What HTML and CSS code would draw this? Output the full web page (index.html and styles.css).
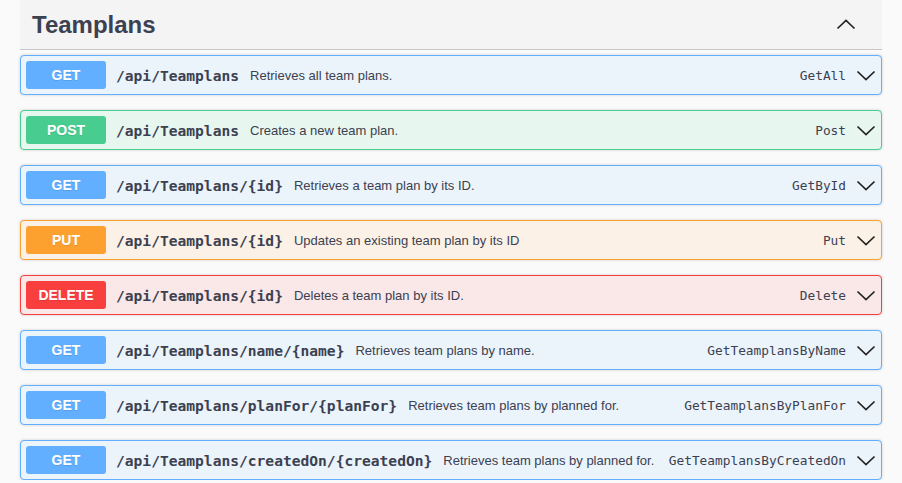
FILE: index.html
```html
<!DOCTYPE html>
<html>
<head>
<meta charset="utf-8">
<link rel="stylesheet" href="styles.css">
</head>
<body>
<div class="wrap">
  <div class="tag">
    <h3 class="tag-title">Teamplans</h3>
    <svg class="arrow-up" width="20" height="20" viewBox="0 0 20 20"><polyline points="1.5,13.5 10,5.5 18.5,13.5" fill="none" stroke="#222" stroke-width="1.7"/></svg>
  </div>
  <div class="ops">
    <div class="op get"><span class="method">GET</span><span class="path">/api/Teamplans</span><span class="desc">Retrieves all team plans.</span><span class="opid">GetAll</span><svg class="arrow" width="20" height="20" viewBox="0 0 20 20"><polyline points="1.5,6.5 10,14.5 18.5,6.5" fill="none" stroke="#222" stroke-width="1.7"/></svg></div>
    <div class="op post"><span class="method">POST</span><span class="path">/api/Teamplans</span><span class="desc">Creates a new team plan.</span><span class="opid">Post</span><svg class="arrow" width="20" height="20" viewBox="0 0 20 20"><polyline points="1.5,6.5 10,14.5 18.5,6.5" fill="none" stroke="#222" stroke-width="1.7"/></svg></div>
    <div class="op get"><span class="method">GET</span><span class="path">/api/Teamplans/{id}</span><span class="desc">Retrieves a team plan by its ID.</span><span class="opid">GetById</span><svg class="arrow" width="20" height="20" viewBox="0 0 20 20"><polyline points="1.5,6.5 10,14.5 18.5,6.5" fill="none" stroke="#222" stroke-width="1.7"/></svg></div>
    <div class="op put"><span class="method">PUT</span><span class="path">/api/Teamplans/{id}</span><span class="desc">Updates an existing team plan by its ID</span><span class="opid">Put</span><svg class="arrow" width="20" height="20" viewBox="0 0 20 20"><polyline points="1.5,6.5 10,14.5 18.5,6.5" fill="none" stroke="#222" stroke-width="1.7"/></svg></div>
    <div class="op delete"><span class="method">DELETE</span><span class="path">/api/Teamplans/{id}</span><span class="desc">Deletes a team plan by its ID.</span><span class="opid">Delete</span><svg class="arrow" width="20" height="20" viewBox="0 0 20 20"><polyline points="1.5,6.5 10,14.5 18.5,6.5" fill="none" stroke="#222" stroke-width="1.7"/></svg></div>
    <div class="op get"><span class="method">GET</span><span class="path">/api/Teamplans/name/{name}</span><span class="desc">Retrieves team plans by name.</span><span class="opid">GetTeamplansByName</span><svg class="arrow" width="20" height="20" viewBox="0 0 20 20"><polyline points="1.5,6.5 10,14.5 18.5,6.5" fill="none" stroke="#222" stroke-width="1.7"/></svg></div>
    <div class="op get"><span class="method">GET</span><span class="path">/api/Teamplans/planFor/{planFor}</span><span class="desc">Retrieves team plans by planned for.</span><span class="opid">GetTeamplansByPlanFor</span><svg class="arrow" width="20" height="20" viewBox="0 0 20 20"><polyline points="1.5,6.5 10,14.5 18.5,6.5" fill="none" stroke="#222" stroke-width="1.7"/></svg></div>
    <div class="op get"><span class="method">GET</span><span class="path">/api/Teamplans/createdOn/{createdOn}</span><span class="desc">Retrieves team plans by planned for.</span><span class="opid">GetTeamplansByCreatedOn</span><svg class="arrow" width="20" height="20" viewBox="0 0 20 20"><polyline points="1.5,6.5 10,14.5 18.5,6.5" fill="none" stroke="#222" stroke-width="1.7"/></svg></div>
  </div>
</div>
</body>
</html>
```
FILE: styles.css
```css
* { box-sizing: border-box; }
html, body { margin: 0; padding: 0; }
body {
  background: #fafafa;
  font-family: "Liberation Sans", Arial, sans-serif;
  color: #3b4151;
  overflow: hidden;
}
.wrap { padding: 0 20px; }
.tag {
  display: flex;
  align-items: center;
  height: 50px;
  background: #f4f4f4;
  border-bottom: 1px solid #c4c6cb;
  padding: 0 26px 0 12px;
}
.tag-title {
  flex: 1;
  margin: 0;
  font-size: 24px;
  font-weight: 700;
  color: #3b4151;
}
.arrow-up { display: block; }
.ops {
  display: flex;
  flex-direction: column;
  gap: 15px;
  margin-top: 5px;
}
.op {
  display: flex;
  align-items: center;
  height: 40px;
  padding: 5px;
  border: 1px solid;
  border-radius: 4px;
  box-shadow: 0 0 3px rgba(0,0,0,.19);
}
.method {
  flex: none;
  width: 80px;
  height: 28px;
  line-height: 28px;
  border-radius: 3px;
  text-align: center;
  color: #fff;
  font-weight: 700;
  font-size: 14px;
  text-shadow: 0 1px 0 rgba(0,0,0,.1);
}
.path {
  padding: 0 10px;
  font-family: "DejaVu Sans Mono", monospace;
  font-weight: 700;
  font-size: 14.6px;
  color: #3b4151;
  white-space: nowrap;
}
.desc {
  flex: 1;
  padding-left: 1px;
  font-size: 13px;
  color: #3b4151;
  white-space: nowrap;
}
.opid {
  font-family: "DejaVu Sans Mono", monospace;
  font-size: 12.8px;
  color: #3b4151;
  margin-right: 10px;
  white-space: nowrap;
}
.arrow { display: block; flex: none; }
.get { background: #ebf3fb; border-color: #61affe; }
.get .method { background: #61affe; }
.post { background: #e8f6f0; border-color: #49cc90; }
.post .method { background: #49cc90; }
.put { background: #fbf1e6; border-color: #fca130; }
.put .method { background: #fca130; }
.delete { background: #fae7e7; border-color: #f93e3e; }
.delete .method { background: #f93e3e; }
```
